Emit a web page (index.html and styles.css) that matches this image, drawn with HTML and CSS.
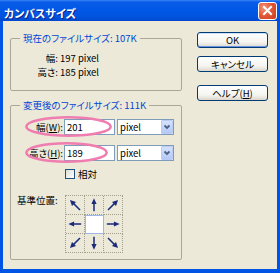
FILE: index.html
```html
<!DOCTYPE html>
<html lang="ja">
<head>
<meta charset="utf-8">
<title>カンバスサイズ</title>
<link rel="stylesheet" href="styles.css">
</head>
<body>
<div class="window">
  <div class="titlebar">
    <span class="title">カンバスサイズ</span>
    <span class="close"><svg width="17" height="16" viewBox="0 0 17 16"><path d="M5 4L12 11M12 4L5 11" stroke="#fff" stroke-width="2" stroke-linecap="square"/></svg></span>
  </div>
  <div class="frame">
    <div class="main">
      <fieldset class="group g1">
        <legend>現在のファイルサイズ: 107K</legend>
        <div class="info">
          <span class="k">幅:</span><span>197 pixel</span>
          <span class="k">高さ:</span><span>185 pixel</span>
        </div>
      </fieldset>
      <fieldset class="group g2">
        <legend>変更後のファイルサイズ: 111K</legend>
        <div class="form">
          <div class="row">
            <span class="lbl">幅(<u>W</u>):</span>
            <span class="input">201</span>
            <span class="select"><span class="val">pixel</span><span class="dd"><svg width="10" height="12" viewBox="0 0 10 12"><path d="M2.5 4.5L5 7L7.5 4.5" fill="none" stroke="#4D6185" stroke-width="1.8"/></svg></span></span>
          </div>
          <div class="row r2">
            <span class="lbl">高さ(<u>H</u>):</span>
            <span class="input">189</span>
            <span class="select"><span class="val">pixel</span><span class="dd"><svg width="10" height="12" viewBox="0 0 10 12"><path d="M2.5 4.5L5 7L7.5 4.5" fill="none" stroke="#4D6185" stroke-width="1.8"/></svg></span></span>
          </div>
          <div class="row r3">
            <span class="lbl"></span>
            <span class="check"></span>
            <span class="ctext">相対</span>
          </div>
          <div class="row r4">
            <span class="alabel">基準位置:</span>
            <div class="anchor">
              <span class="cell"><svg viewBox="0 0 19 19"><g transform="rotate(-45 9.5 9.5)"><path d="M9.5 17V6" stroke="#1C2A7A" stroke-width="1.6"/><path d="M9.5 2L6.5 8H12.5Z" fill="#1C2A7A"/></g></svg></span>
              <span class="cell"><svg viewBox="0 0 19 19"><path d="M9.5 16V6" stroke="#1C2A7A" stroke-width="1.6"/><path d="M9.5 2.5L6.8 8.5H12.2Z" fill="#1C2A7A"/></svg></span>
              <span class="cell"><svg viewBox="0 0 19 19"><g transform="rotate(45 9.5 9.5)"><path d="M9.5 17V6" stroke="#1C2A7A" stroke-width="1.6"/><path d="M9.5 2L6.5 8H12.5Z" fill="#1C2A7A"/></g></svg></span>
              <span class="cell"><svg viewBox="0 0 19 19"><g transform="rotate(-90 9.5 9.5)"><path d="M9.5 16V6" stroke="#1C2A7A" stroke-width="1.6"/><path d="M9.5 2.5L6.8 8.5H12.2Z" fill="#1C2A7A"/></g></svg></span>
              <span class="cell center"></span>
              <span class="cell"><svg viewBox="0 0 19 19"><g transform="rotate(90 9.5 9.5)"><path d="M9.5 16V6" stroke="#1C2A7A" stroke-width="1.6"/><path d="M9.5 2.5L6.8 8.5H12.2Z" fill="#1C2A7A"/></g></svg></span>
              <span class="cell"><svg viewBox="0 0 19 19"><g transform="rotate(-135 9.5 9.5)"><path d="M9.5 17V6" stroke="#1C2A7A" stroke-width="1.6"/><path d="M9.5 2L6.5 8H12.5Z" fill="#1C2A7A"/></g></svg></span>
              <span class="cell"><svg viewBox="0 0 19 19"><g transform="rotate(180 9.5 9.5)"><path d="M9.5 16V6" stroke="#1C2A7A" stroke-width="1.6"/><path d="M9.5 2.5L6.8 8.5H12.2Z" fill="#1C2A7A"/></g></svg></span>
              <span class="cell"><svg viewBox="0 0 19 19"><g transform="rotate(135 9.5 9.5)"><path d="M9.5 17V6" stroke="#1C2A7A" stroke-width="1.6"/><path d="M9.5 2L6.5 8H12.5Z" fill="#1C2A7A"/></g></svg></span>
            </div>
          </div>
        </div>
      </fieldset>
    </div>
    <div class="buttons">
      <span class="btn ok">OK</span>
      <span class="btn cancel">キャンセル</span>
      <span class="btn help">ヘルプ(<u>H</u>)</span>
    </div>
  </div>
  <svg class="marks" width="280" height="273" viewBox="0 0 280 273">
    <ellipse cx="68.5" cy="126.5" rx="42.2" ry="9.3" fill="none" stroke="#F07DB0" stroke-width="2.6"/>
    <ellipse cx="66.5" cy="152.5" rx="40.2" ry="9.3" fill="none" stroke="#F07DB0" stroke-width="2.6"/>
  </svg>
</div>
</body>
</html>
```
FILE: styles.css
```css
* { box-sizing: border-box; }
html, body { margin: 0; padding: 0; }
body {
  width: 280px;
  height: 273px;
  overflow: hidden;
  background: #ECE9D8;
  color: #000;
  font-family: "Noto Sans CJK JP", "Noto Sans", sans-serif;
  font-size: 9.5px;
  font-feature-settings: "palt";
}
.window {
  position: relative;
  width: 280px;
  height: 273px;
  display: flex;
  flex-direction: column;
}
.titlebar {
  height: 21px;
  flex: none;
  display: flex;
  justify-content: space-between;
  align-items: flex-start;
  padding: 0 3px 0 4px;
  background: linear-gradient(#3A86F4 0, #0A5CE8 2px, #0058E6 45%, #0053DE 80%, #0048CC 100%);
}
.title {
  margin-top: 5px;
  line-height: 16px;
  color: #fff;
  font-weight: bold;
  font-size: 11px;
  text-shadow: 1px 1px 0 #0A2490;
}
.close {
  margin-top: 2px;
  width: 19px;
  height: 18px;
  border: 1px solid #fff;
  border-radius: 3px;
  background: radial-gradient(circle at 30% 30%, #F2977C 0, #E45A38 45%, #C93A1C 100%);
  display: flex;
  align-items: center;
  justify-content: center;
}
.close svg { display: block; }
.frame {
  flex: 1;
  display: flex;
  gap: 15px;
  padding: 11px 9px 0 7px;
  border-style: solid;
  border-color: #0055E5;
  border-width: 0 3px 4px 3px;
  background: #ECE9D8;
}
.main { width: 172px; flex: none; }
.group {
  margin: 0;
  padding: 0;
  min-width: 0;
  border: 1px solid #ACA899;
  border-radius: 2px;
}
.group legend {
  margin-left: 9px;
  padding: 0 3px;
  line-height: 13px;
  color: #0046D5;
}
.g1 { padding: 6px 0 11px; }
.info {
  display: grid;
  grid-template-columns: 47px auto;
  column-gap: 2px;
  line-height: 14px;
}
.info .k { text-align: right; }
.g2 { margin-top: 8px; padding: 7px 0 7px; }
.form { display: flex; flex-direction: column; }
.row { display: flex; align-items: center; height: 16px; }
.r2 { margin-top: 10px; }
.r3 { margin-top: 7px; height: 12px; }
.r4 { margin-top: 15px; height: 57px; align-items: flex-start; }
.lbl {
  width: 53px;
  flex: none;
  text-align: right;
  padding-right: 1px;
  line-height: 16px;
}
.input {
  width: 51px;
  height: 16px;
  background: #fff;
  border: 1px solid #7F9DB9;
  padding-left: 2px;
  line-height: 14px;
}
.select {
  margin-left: 2px;
  width: 57px;
  height: 16px;
  background: #fff;
  border: 1px solid #7F9DB9;
  display: flex;
  justify-content: space-between;
  align-items: stretch;
}
.val { padding-left: 2px; line-height: 14px; }
.dd {
  width: 12px;
  background: linear-gradient(#D6E2FC, #B5C9F6);
  border: 1px solid #B9CCF8;
  border-radius: 1px;
  display: flex;
  align-items: center;
  justify-content: center;
}
.dd svg { display: block; }
.check {
  margin-left: 1px;
  width: 10px;
  height: 10px;
  border: 1px solid #1C5180;
  background: linear-gradient(135deg, #DCDCD7, #fff);
}
.ctext { margin-left: 3px; line-height: 12px; }
.alabel {
  width: 53px;
  flex: none;
  padding-left: 6px;
  line-height: 11px;
}
.anchor {
  margin-left: 1px;
  display: grid;
  grid-template-columns: repeat(3, 19px);
  grid-template-rows: repeat(3, 19px);
  border-top: 1px dotted #A29E8E;
  border-left: 1px dotted #A29E8E;
}
.cell {
  border-right: 1px dotted #A29E8E;
  border-bottom: 1px dotted #A29E8E;
  display: block;
}
.cell svg { display: block; width: 18px; height: 18px; }
.cell.center {
  background: #fff;
  border: 1px solid #9DB8E6;
}
.buttons {
  width: 71px;
  flex: none;
  display: flex;
  flex-direction: column;
}
.btn {
  height: 16px;
  border: 1px solid #003C74;
  border-radius: 3px;
  background: linear-gradient(#FFFFFF, #F4F4F0 65%, #DCD7CC);
  text-align: center;
  line-height: 14px;
  font-size: 9.5px;
}
.ok { box-shadow: inset 0 1px 0 #CEE0FA, inset 0 -1px 0 #6A93E6; }
.cancel { margin-top: 8px; }
.help { margin-top: 13px; }
.marks {
  position: absolute;
  left: 0;
  top: 0;
  pointer-events: none;
}
```
